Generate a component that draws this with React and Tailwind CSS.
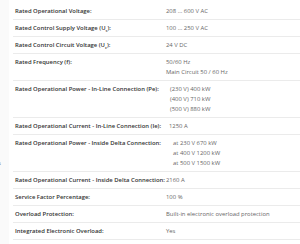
const Sub = ({ children }) => (
  <span className="relative top-[1.5px] align-baseline text-[4px] leading-none">{children}</span>
);

const rows = [
  { label: <>Rated Operational Voltage:</>, value: ['208 ... 600 V AC'] },
  { label: <>Rated Control Supply Voltage (U<Sub>s</Sub>):</>, value: ['100 ... 250 V AC'] },
  { label: <>Rated Control Circuit Voltage (U<Sub>c</Sub>):</>, value: ['24 V DC'] },
  { label: <>Rated Frequency (f):</>, value: ['50/60 Hz', 'Main Circuit 50 / 60 Hz'] },
  { label: <>Rated Operational Power - In-Line Connection (Pe):</>, value: ['(230 V) 400 kW', '(400 V) 710 kW', '(500 V) 880 kW'], gap: 'pl-[4px]' },
  { label: <>Rated Operational Current - In-Line Connection (Ie):</>, value: ['1250 A'], gap: 'pl-[3px]' },
  { label: <>Rated Operational Power - Inside Delta Connection:</>, value: ['at 230 V 670 kW', 'at 400 V 1200 kW', 'at 500 V 1500 kW'], gap: 'pl-[7px]' },
  { label: <>Rated Operational Current - Inside Delta Connection:</>, value: ['2160 A'] },
  { label: <>Service Factor Percentage:</>, value: ['100 %'] },
  { label: <>Overload Protection:</>, value: ['Built-in electronic overload protection'] },
  { label: <>Integrated Electronic Overload:</>, value: ['Yes'] },
];

export default function App() {
  return (
    <div className="flex h-[244px] w-[300px] overflow-hidden bg-white text-[5.9px] leading-[10px]" style={{ fontFamily: '"Open Sans", "Noto Sans", sans-serif' }}>
      <div className="relative w-[9px] shrink-0 bg-[#fafafa]">
        <span className="absolute left-[-2px] top-[158px] text-[#777]">s</span>
      </div>
      <div className="ml-[4px] flex-1 pt-[3px]">
        {rows.map((r, i) => (
          <div key={i} className="flex border-b border-[#ebebeb] py-[3px] pl-[2px]">
            <div className="min-w-[151px] shrink-0 whitespace-nowrap font-semibold text-[#333]">{r.label}</div>
            <div className={`whitespace-nowrap text-[#666] ${r.gap || ''}`}>
              {r.value.map((v) => <div key={v}>{v}</div>)}
            </div>
          </div>
        ))}
      </div>
    </div>
  );
}
